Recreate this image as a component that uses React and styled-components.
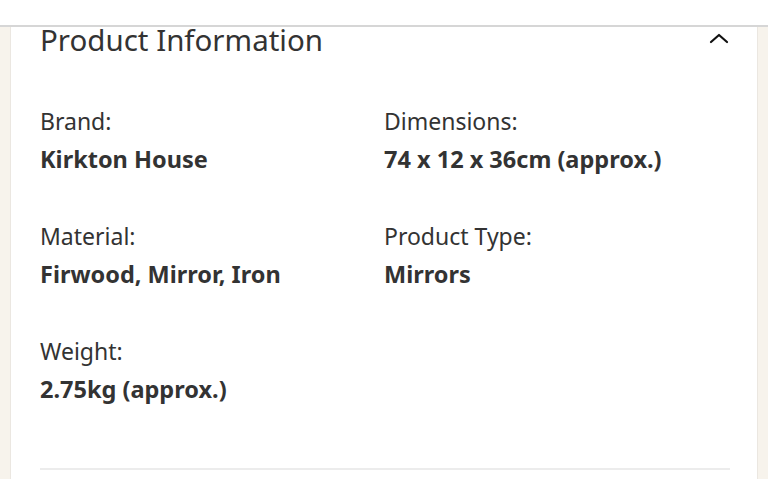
import React from "react";
import styled, { createGlobalStyle } from "styled-components";

const Global = createGlobalStyle`
  html, body {
    margin: 0;
    padding: 0;
    background: #ffffff;
  }
  body {
    font-family: "Noto Sans", "Open Sans", sans-serif;
    color: #333333;
  }
`;

const TopBar = styled.div`
  height: 25px;
  background: #ffffff;
  border-bottom: 2px solid #d6d6d6;
`;

const Page = styled.div`
  background: #f7f3ec;
  padding: 0 10px;
  height: 452px;
  display: flex;
`;

const Panel = styled.section`
  flex: 1;
  background: #ffffff;
  border-left: 1px solid #ebe7e1;
  border-right: 1px solid #ebe7e1;
  padding: 0 27px 0 29px;
`;

const Header = styled.div`
  display: flex;
  align-items: center;
  justify-content: space-between;
  height: 26px;
`;

const Title = styled.h2`
  margin: 0;
  font-size: 29.5px;
  font-weight: 400;
  line-height: 24px;
  color: #333333;
`;

const Chevron = styled.svg`
  width: 24px;
  height: 24px;
  margin-right: -1px;
  margin-top: -2px;
`;

const Grid = styled.dl`
  display: grid;
  grid-template-columns: 344px 1fr;
  row-gap: 47px;
  margin: 53px 0 0;
  padding-bottom: 64px;
  border-bottom: 2px solid #ececec;
`;

const Item = styled.div`
  display: flex;
  flex-direction: column;
  gap: 8px;
`;

const Label = styled.dt`
  font-size: 23px;
  line-height: 30px;
  font-weight: 400;
`;

const Value = styled.dd`
  margin: 0;
  font-size: 23.5px;
  line-height: 30px;
  font-weight: 700;
`;

const specs = [
  ["Brand:", "Kirkton House"],
  ["Dimensions:", "74 x 12 x 36cm (approx.)"],
  ["Material:", "Firwood, Mirror, Iron"],
  ["Product Type:", "Mirrors"],
  ["Weight:", "2.75kg (approx.)"],
];

export default function App() {
  return (
    <>
      <Global />
      <TopBar />
      <Page>
        <Panel>
          <Header>
            <Title>Product Information</Title>
            <Chevron viewBox="0 0 24 24" fill="none" stroke="#111" strokeWidth="2.2" strokeLinecap="round" strokeLinejoin="round">
              <path d="M4 15l8-7 8 7" />
            </Chevron>
          </Header>
          <Grid>
            {specs.map(([label, value]) => (
              <Item key={label}>
                <Label>{label}</Label>
                <Value>{value}</Value>
              </Item>
            ))}
          </Grid>
        </Panel>
      </Page>
    </>
  );
}
